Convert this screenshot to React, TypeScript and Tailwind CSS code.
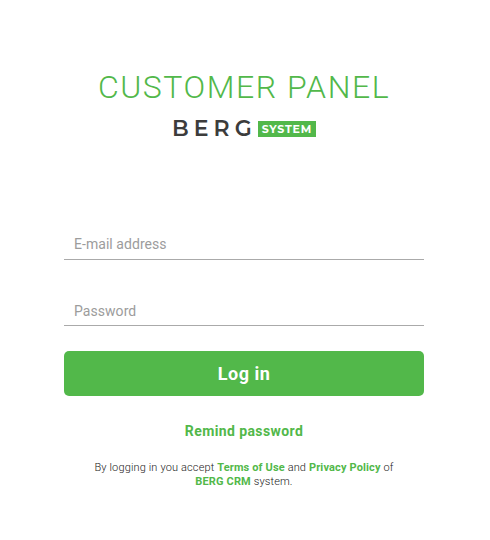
export default function App() {
  return (
    <div className="w-[488px] h-[540px] bg-white flex flex-col items-center font-['Roboto',sans-serif]">
      <h1 className="mt-[67px] text-[32px] leading-[40px] font-light tracking-[1.55px] text-[#52b84a]">CUSTOMER PANEL</h1>
      <div className="mt-[10px] flex items-center gap-[1px]">
        <span className="text-[22px] leading-[24px] font-semibold tracking-[5px] text-[#3c3c3c] font-['Montserrat','Inter',sans-serif]">BERG</span>
        <span className="bg-[#52b84a] text-white text-[11px] leading-[16px] font-bold px-[4px] tracking-[0.75px] font-['Montserrat','Inter',sans-serif]">SYSTEM</span>
      </div>
      <form className="w-[360px] mt-[82px] flex flex-col">
        <div className="h-[37px] border-b border-[#aaaaaa] pl-[10px] pb-[4px] flex items-end text-[14px] text-[#9c9c9c] tracking-[0.05px]">E-mail address</div>
        <div className="mt-[29px] h-[37px] border-b border-[#aaaaaa] pl-[10px] pb-[3px] flex items-end text-[14px] text-[#9c9c9c] tracking-[0.05px]">Password</div>
        <button type="button" className="mt-[25px] h-[45px] rounded-[5px] bg-[#52b84a] text-white text-[18px] font-bold tracking-[0.5px]">Log in</button>
      </form>
      <div className="mt-[26px] text-[14px] leading-[18px] font-bold text-[#52b84a] tracking-[0.4px]">Remind password</div>
      <p className="mt-[21px] w-[320px] text-center text-[11px] leading-[14px] font-light text-[#222222] tracking-[0.14px]">
        By logging in you accept <b className="font-bold text-[#52b84a]">Terms of Use</b> and <b className="font-bold text-[#52b84a]">Privacy Policy</b> of <b className="font-bold text-[#52b84a]">BERG CRM</b> system.
      </p>
    </div>
  );
}
